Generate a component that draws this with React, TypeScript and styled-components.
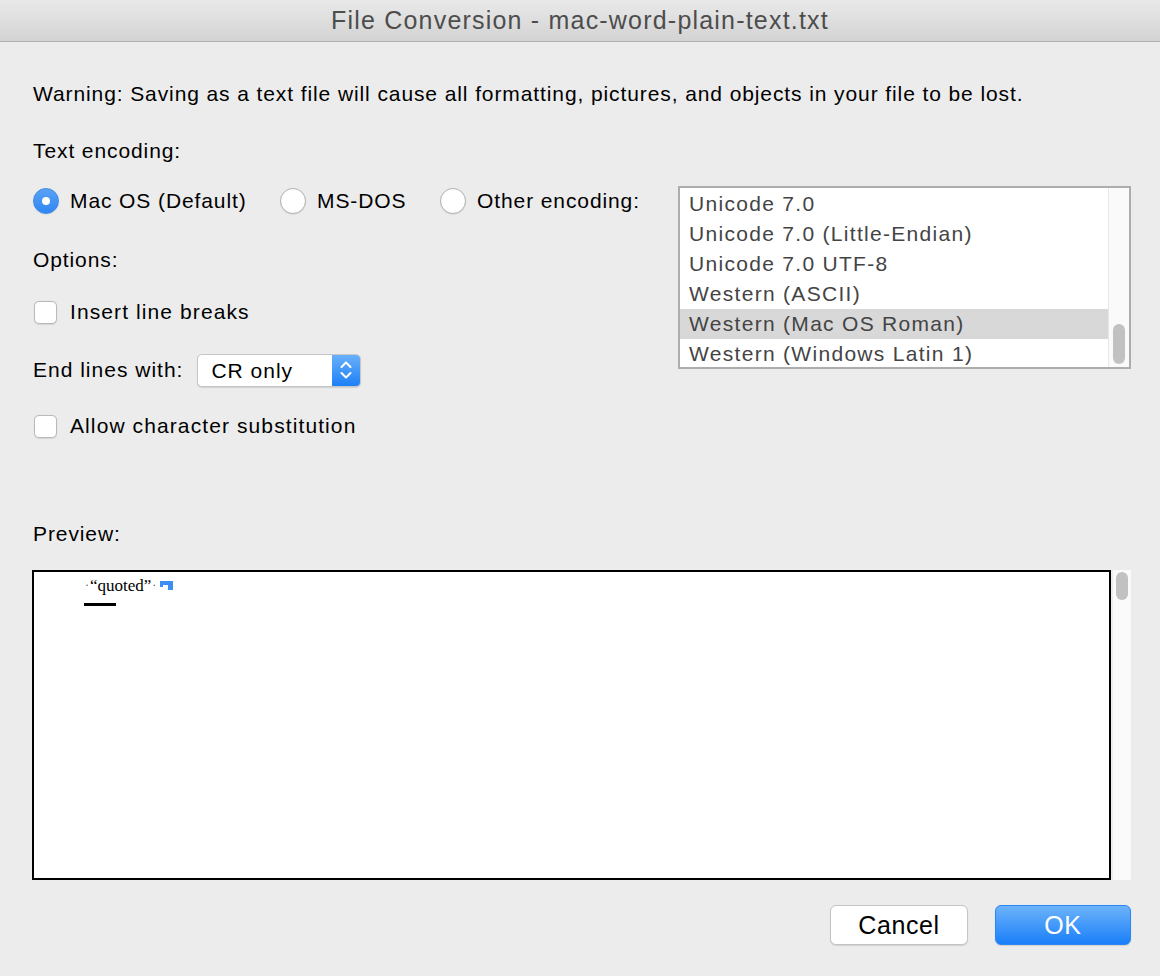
import React from "react";
import styled, { createGlobalStyle } from "styled-components";

// Global
const GlobalStyle = createGlobalStyle`
  html, body {
    margin: 0;
    padding: 0;
    background: #ececec;
  }
  body {
    font-family: "Liberation Sans", Arial, Helvetica, sans-serif;
    color: #000;
  }
`;

// Window
const Window = styled.div`
  width: 1160px;
  height: 976px;
  background: #ececec;
  display: flex;
  flex-direction: column;
  overflow: hidden;
`;

const TitleBar = styled.div`
  height: 41px;
  flex-shrink: 0;
  display: flex;
  align-items: center;
  justify-content: center;
  background: linear-gradient(#e9e9e9, #d3d3d3);
  border-bottom: 1px solid #b1b1b1;
  font-size: 25px;
  letter-spacing: 1.2px;
  color: #4d4d4d;
`;

const Body = styled.div`
  display: flex;
  flex-direction: column;
  padding: 37px 29px 0 33px;
  font-size: 21px;
  letter-spacing: 0.9px;
`;

const Line = styled.div<{ $top?: number }>`
  height: 30px;
  line-height: 30px;
  margin-top: ${(p) => p.$top ?? 0}px;
  white-space: nowrap;
`;

// Encoding section
const EncodingSection = styled.div`
  display: flex;
  align-items: flex-start;
  margin-top: 20px;
`;

const LeftColumn = styled.div`
  flex: 1;
  display: flex;
  flex-direction: column;
`;

const RadioRow = styled.div`
  display: flex;
  align-items: center;
  height: 30px;
`;

const RadioOption = styled.label<{ $width: number }>`
  display: flex;
  align-items: center;
  gap: 11px;
  width: ${(p) => p.$width}px;
  white-space: nowrap;
`;

const RadioCircle = styled.span<{ $checked?: boolean }>`
  width: 26px;
  height: 26px;
  border-radius: 50%;
  box-sizing: border-box;
  flex-shrink: 0;
  display: flex;
  align-items: center;
  justify-content: center;
  background: ${(p) =>
    p.$checked ? "linear-gradient(#5aa2f5, #2f86f2)" : "#ffffff"};
  border: 1px solid ${(p) => (p.$checked ? "#3a88e8" : "#b4b4b4")};
  box-shadow: 0 0.5px 1px rgba(0, 0, 0, 0.12);

  &::after {
    content: "";
    display: ${(p) => (p.$checked ? "block" : "none")};
    width: 8px;
    height: 8px;
    border-radius: 50%;
    background: #fff;
  }
`;

const CheckRow = styled.label<{ $top: number }>`
  display: flex;
  align-items: center;
  gap: 13px;
  height: 30px;
  margin-top: ${(p) => p.$top}px;
  white-space: nowrap;
  letter-spacing: 1.1px;
`;

const CheckBox = styled.span`
  width: 23px;
  height: 23px;
  margin-left: 1px;
  box-sizing: border-box;
  border-radius: 5px;
  background: #fff;
  border: 1px solid #b9b9b9;
  box-shadow: 0 0.5px 1px rgba(0, 0, 0, 0.1);
`;

const SelectRow = styled.div`
  display: flex;
  align-items: center;
  gap: 14px;
  height: 34px;
  margin-top: 26px;
  white-space: nowrap;
  letter-spacing: 1px;
`;

const PopUp = styled.div`
  width: 164px;
  height: 33px;
  box-sizing: border-box;
  display: flex;
  border-radius: 5px;
  background: #fff;
  border: 1px solid #c6c6c6;
  box-shadow: 0 1px 1px rgba(0, 0, 0, 0.12);
  overflow: hidden;
`;

const PopUpText = styled.span`
  flex: 1;
  padding-left: 13px;
  line-height: 31px;
`;

const PopUpArrows = styled.span`
  width: 28px;
  display: flex;
  align-items: center;
  justify-content: center;
  background: linear-gradient(#69b0fa, #1d80f6);
`;

// Encoding list
const ListBox = styled.div`
  width: 453px;
  height: 183px;
  box-sizing: border-box;
  border: 2px solid #adadad;
  background: #fff;
  display: flex;
  flex-shrink: 0;
`;

const ListItems = styled.div`
  flex: 1;
  display: flex;
  flex-direction: column;
  padding-top: 1px;
`;

const ListItem = styled.div<{ $selected?: boolean }>`
  height: 30px;
  line-height: 30px;
  padding-left: 9px;
  color: #444;
  letter-spacing: 1.3px;
  background: ${(p) => (p.$selected ? "#d8d8d8" : "transparent")};
  white-space: nowrap;
`;

const ScrollTrack = styled.div<{ $align: "start" | "end" }>`
  width: 21px;
  box-sizing: border-box;
  background: #fafafa;
  border-left: 1px solid #e8e8e8;
  display: flex;
  flex-direction: column;
  justify-content: ${(p) => (p.$align === "end" ? "flex-end" : "flex-start")};
  align-items: center;
  padding: 3px 0;
`;

const ScrollThumb = styled.div<{ $height: number }>`
  width: 12px;
  height: ${(p) => p.$height}px;
  border-radius: 6px;
  background: #c1c1c1;
`;

// Preview
const PreviewArea = styled.div`
  display: flex;
  margin-top: 21px;
  margin-left: -1px;
  height: 310px;
`;

const PreviewBox = styled.div`
  width: 1079px;
  flex-shrink: 0;
  box-sizing: border-box;
  border: 2px solid #000;
  background: #fff;
  padding: 3px 0 0 50px;
  letter-spacing: 0;
`;

const PreviewText = styled.div`
  font-family: "Liberation Serif", "Times New Roman", serif;
  font-size: 17px;
  line-height: 21px;
  display: flex;
  align-items: center;
`;

const Dot = styled.span`
  color: #555;
  font-size: 12px;
  margin: 0 1px;
`;

const Cursor = styled.div`
  width: 32px;
  height: 3px;
  background: #000;
  margin-top: 7px;
`;

const PreviewScroll = styled.div`
  width: 18px;
  flex-shrink: 0;
  background: #fafafa;
  display: flex;
  justify-content: center;
  padding-top: 2px;
  margin-left: 2px;
`;

// Buttons
const ButtonRow = styled.div`
  display: flex;
  justify-content: flex-end;
  gap: 27px;
  margin-top: 25px;
`;

const Button = styled.button<{ $primary?: boolean }>`
  width: ${(p) => (p.$primary ? 136 : 138)}px;
  height: 40px;
  box-sizing: border-box;
  border-radius: 6px;
  font-family: "Liberation Sans", Arial, sans-serif;
  font-size: 25px;
  letter-spacing: 0.6px;
  padding: 0;
  color: ${(p) => (p.$primary ? "#fff" : "#000")};
  background: ${(p) =>
    p.$primary ? "linear-gradient(#6cb3fa, #1a7ff9)" : "#ffffff"};
  border: 1px solid ${(p) => (p.$primary ? "#2b86f3" : "#c4c4c4")};
  box-shadow: 0 1px 1px rgba(0, 0, 0, 0.12);
`;

const ArrowsIcon = () => (
  <svg width="14" height="22" viewBox="0 0 14 22" fill="none">
    <path
      d="M2.5 8 L7 3.5 L11.5 8"
      stroke="#fff"
      strokeWidth="2"
      strokeLinecap="round"
      strokeLinejoin="round"
    />
    <path
      d="M2.5 14 L7 18.5 L11.5 14"
      stroke="#fff"
      strokeWidth="2"
      strokeLinecap="round"
      strokeLinejoin="round"
    />
  </svg>
);

const ReturnMark = () => (
  <svg width="13" height="9" viewBox="0 0 13 9" style={{ marginLeft: 3 }}>
    <path d="M0 0 H13 V9 H8 V4 H3 V6 H0 Z" fill="#3d8ef2" />
  </svg>
);

const encodings = [
  "Unicode 7.0",
  "Unicode 7.0 (Little-Endian)",
  "Unicode 7.0 UTF-8",
  "Western (ASCII)",
  "Western (Mac OS Roman)",
  "Western (Windows Latin 1)",
];

export default function App() {
  return (
    <Window>
      <GlobalStyle />
      <TitleBar>File Conversion - mac-word-plain-text.txt</TitleBar>
      <Body>
        <Line>
          Warning: Saving as a text file will cause all formatting, pictures,
          and objects in your file to be lost.
        </Line>
        <Line $top={27}>Text encoding:</Line>

        <EncodingSection>
          <LeftColumn>
            <RadioRow>
              <RadioOption $width={247}>
                <RadioCircle $checked />
                Mac OS (Default)
              </RadioOption>
              <RadioOption $width={160}>
                <RadioCircle />
                MS-DOS
              </RadioOption>
              <RadioOption $width={200}>
                <RadioCircle />
                Other encoding:
              </RadioOption>
            </RadioRow>

            <Line $top={29}>Options:</Line>

            <CheckRow $top={22}>
              <CheckBox />
              Insert line breaks
            </CheckRow>

            <SelectRow>
              End lines with:
              <PopUp>
                <PopUpText>CR only</PopUpText>
                <PopUpArrows>
                  <ArrowsIcon />
                </PopUpArrows>
              </PopUp>
            </SelectRow>

            <CheckRow $top={24}>
              <CheckBox />
              Allow character substitution
            </CheckRow>
          </LeftColumn>

          <ListBox>
            <ListItems>
              {encodings.map((name) => (
                <ListItem key={name} $selected={name === "Western (Mac OS Roman)"}>
                  {name}
                </ListItem>
              ))}
            </ListItems>
            <ScrollTrack $align="end">
              <ScrollThumb $height={40} />
            </ScrollTrack>
          </ListBox>
        </EncodingSection>

        <Line $top={78}>Preview:</Line>

        <PreviewArea>
          <PreviewBox>
            <PreviewText>
              <Dot>·</Dot>“quoted”<Dot>·</Dot>
              <ReturnMark />
            </PreviewText>
            <Cursor />
          </PreviewBox>
          <PreviewScroll>
            <ScrollThumb $height={28} />
          </PreviewScroll>
        </PreviewArea>

        <ButtonRow>
          <Button>Cancel</Button>
          <Button $primary>OK</Button>
        </ButtonRow>
      </Body>
    </Window>
  );
}
